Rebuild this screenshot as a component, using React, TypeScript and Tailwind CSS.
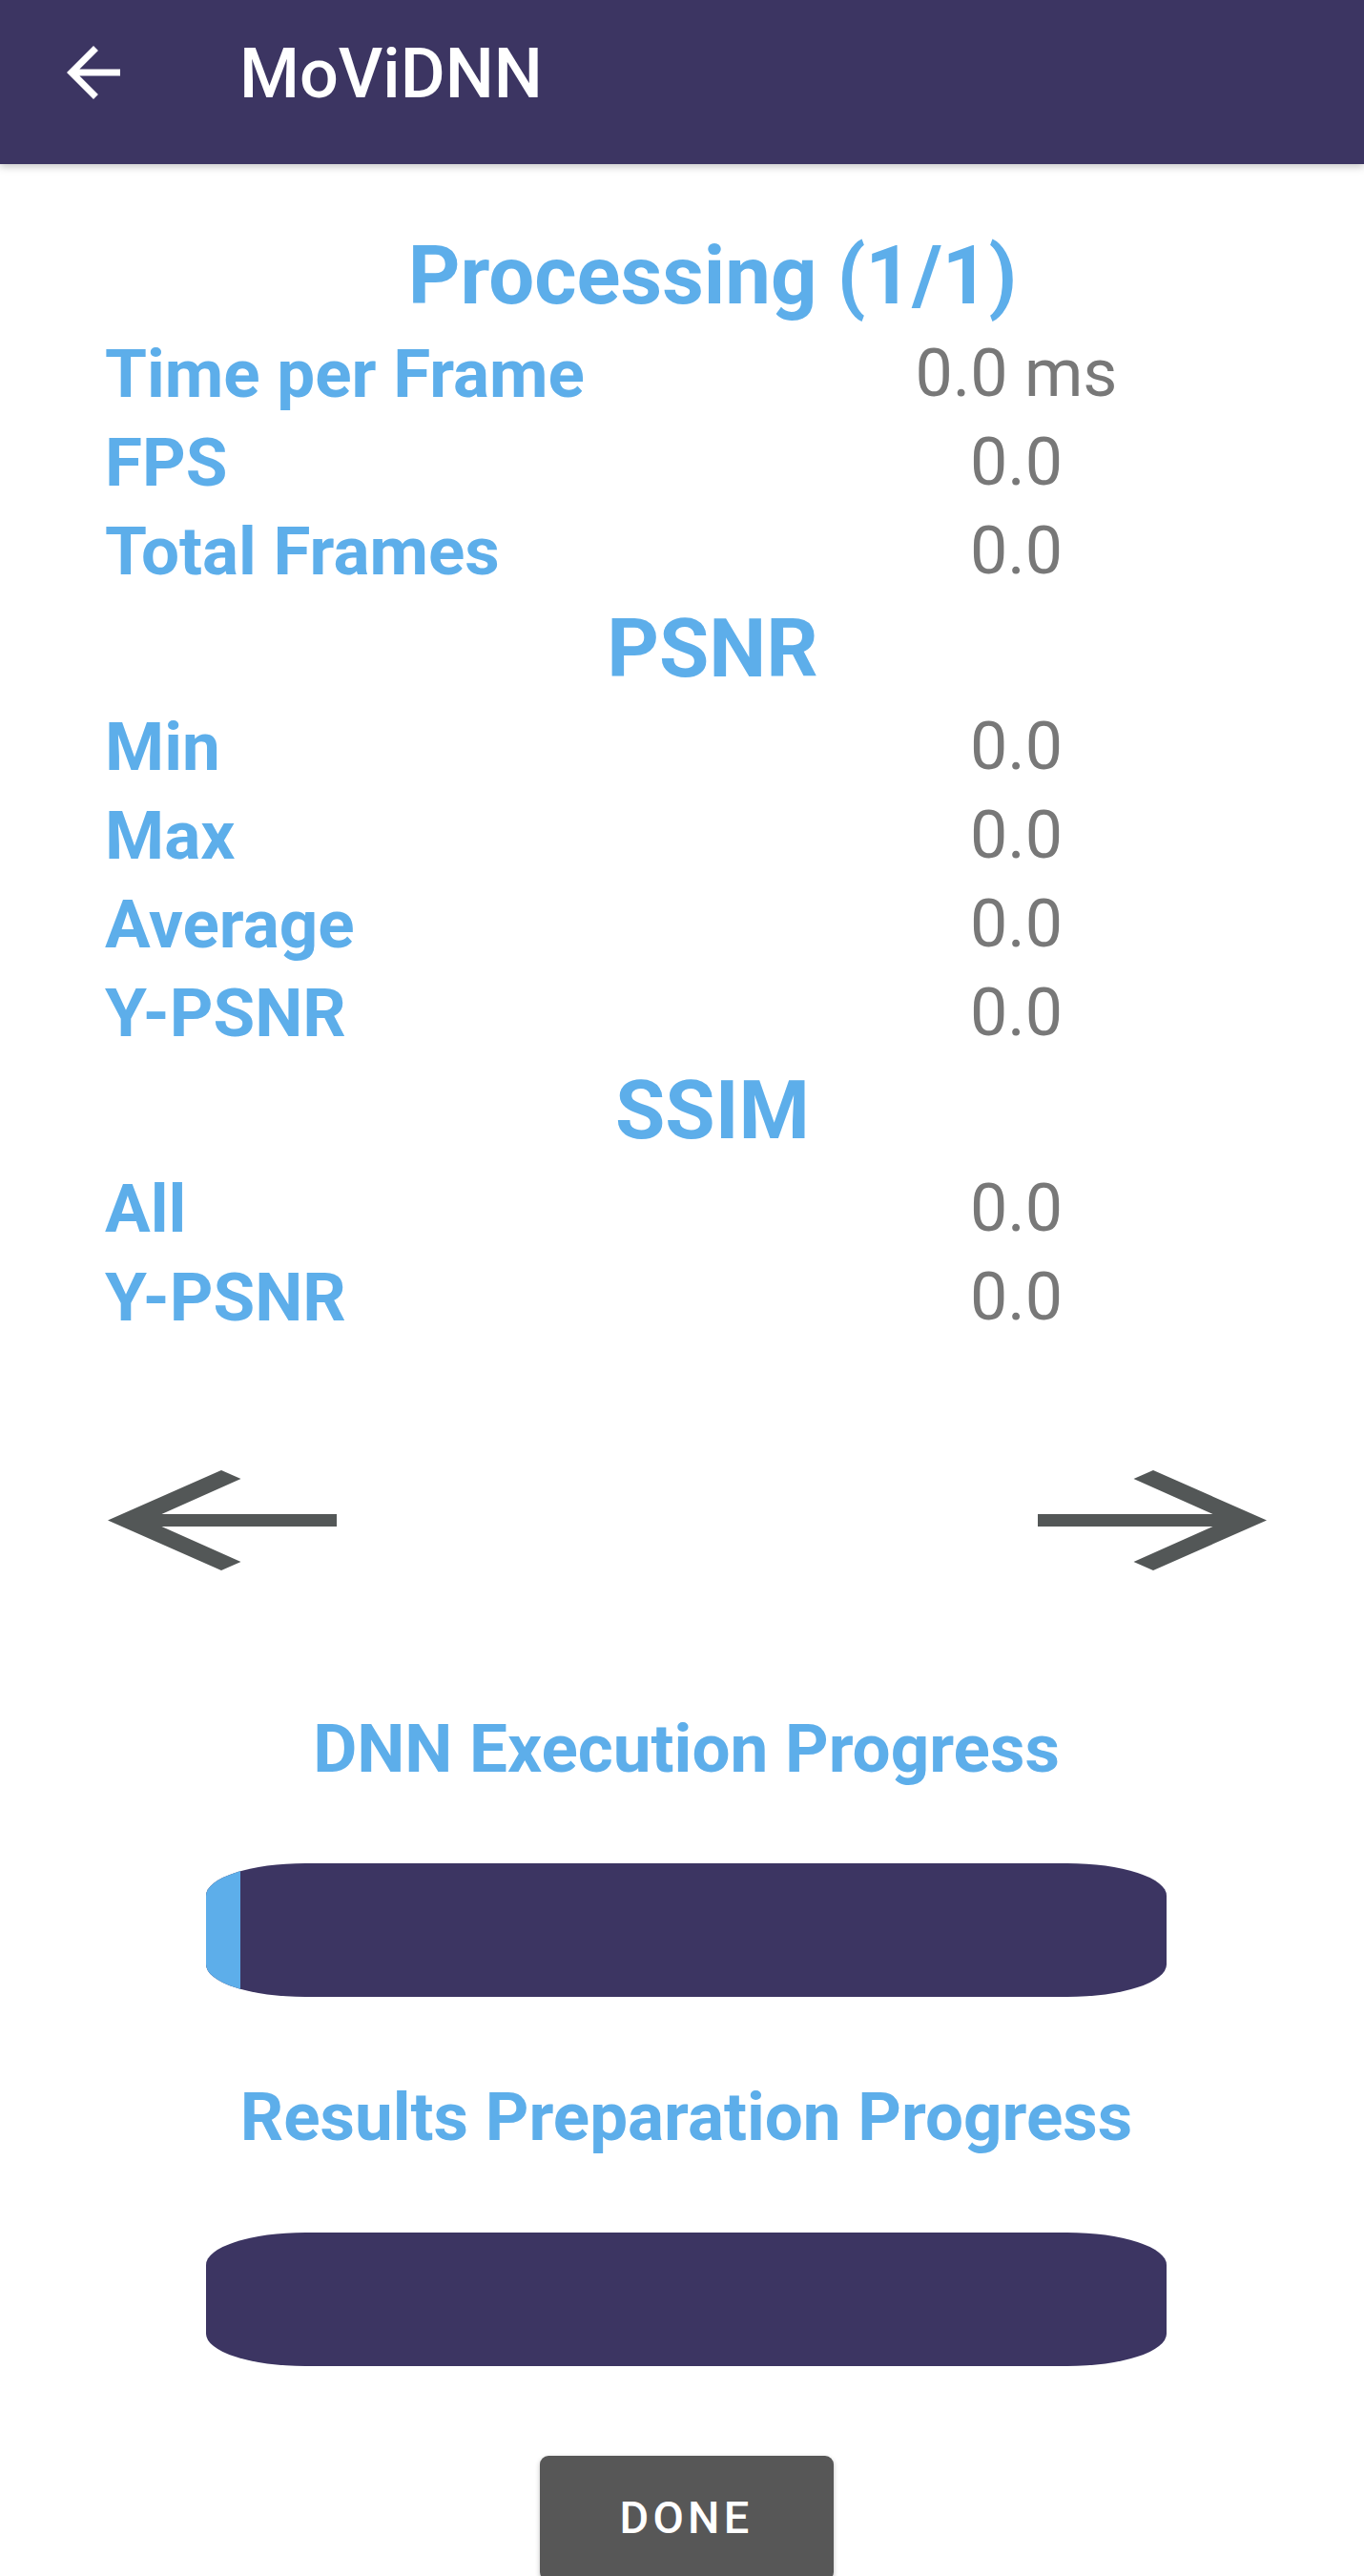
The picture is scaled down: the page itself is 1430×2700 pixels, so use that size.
import React from "react";

const labelCls = "text-[71px] leading-[93px] font-bold text-[#5daeea] whitespace-nowrap";
const valueCls = "text-[70px] leading-[93px] text-[#787878] text-center whitespace-nowrap";
const headCls = "col-span-2 text-center text-[85px] leading-[112px] font-bold text-[#5daeea] whitespace-nowrap";

function Row({ label, value }: { label: string; value: string }) {
  return (
    <>
      <div className={labelCls}>{label}</div>
      <div className={valueCls}>{value}</div>
    </>
  );
}

function BigArrow({ dir }: { dir: "left" | "right" }) {
  const pts =
    "0,52.5 119,0 139.5,9 56.5,46 240,46 240,59 56.5,59 139.5,96 119,105";
  return (
    <svg width="240" height="105" viewBox="0 0 240 105" className="block">
      <polygon
        points={pts}
        fill="#535757"
        transform={dir === "right" ? "translate(240,0) scale(-1,1)" : undefined}
      />
    </svg>
  );
}

function ProgressBar({ fill }: { fill: number }) {
  return (
    <div className="w-[1007px] h-[140px] rounded-[104px/34px] bg-[#3c3562] overflow-hidden flex">
      <div className="h-full bg-[#5daeea]" style={{ width: fill }} />
    </div>
  );
}

export default function App() {
  return (
    <div className="min-h-[2700px] bg-white font-['Roboto','Liberation_Sans',sans-serif] overflow-hidden">
      <header className="relative z-10 h-[172px] bg-[#3c3562] shadow-[0_3px_8px_rgba(0,0,0,0.22)] flex items-start">
        <div className="ml-[56px] mt-[34px] w-[84px] h-[84px]">
          <svg viewBox="0 0 24 24" width="84" height="84" fill="#ffffff">
            <path d="M20 11H7.83l5.59-5.59L12 4l-8 8 8 8 1.41-1.41L7.83 13H20v-2z" />
          </svg>
        </div>
        <h1 className="ml-[111px] mt-[37px] text-[72px] leading-[82px] font-medium text-white">
          MoViDNN
        </h1>
      </header>

      <div className="ml-[110px] w-[1274px] mt-[61px] grid grid-cols-2">
        <div className={headCls}>Processing (1/1)</div>
        <Row label="Time per Frame" value="0.0 ms" />
        <Row label="FPS" value="0.0" />
        <Row label="Total Frames" value="0.0" />
        <div className={headCls}>PSNR</div>
        <Row label="Min" value="0.0" />
        <Row label="Max" value="0.0" />
        <Row label="Average" value="0.0" />
        <Row label="Y-PSNR" value="0.0" />
        <div className={headCls}>SSIM</div>
        <Row label="All" value="0.0" />
        <Row label="Y-PSNR" value="0.0" />
      </div>

      <div className="mt-[135px] flex justify-between pl-[113px] pr-[102px]">
        <BigArrow dir="left" />
        <BigArrow dir="right" />
      </div>

      <div className="pl-[9px] flex flex-col items-center">
        <h2 className="mt-[146px] text-[71px] leading-[82px] font-bold text-[#5daeea] whitespace-nowrap">
          DNN Execution Progress
        </h2>
        <div className="mt-[79px]">
          <ProgressBar fill={36} />
        </div>
        <h2 className="mt-[85px] text-[71px] leading-[82px] font-bold text-[#5daeea] whitespace-nowrap">
          Results Preparation Progress
        </h2>
        <div className="mt-[80px]">
          <ProgressBar fill={0} />
        </div>
        <button className="mt-[94px] w-[308px] h-[131px] rounded-[9px] bg-[#575757] text-white text-[47px] font-medium tracking-[0.09em] shadow-[0_2px_5px_rgba(0,0,0,0.25)]">
          DONE
        </button>
      </div>
    </div>
  );
}
